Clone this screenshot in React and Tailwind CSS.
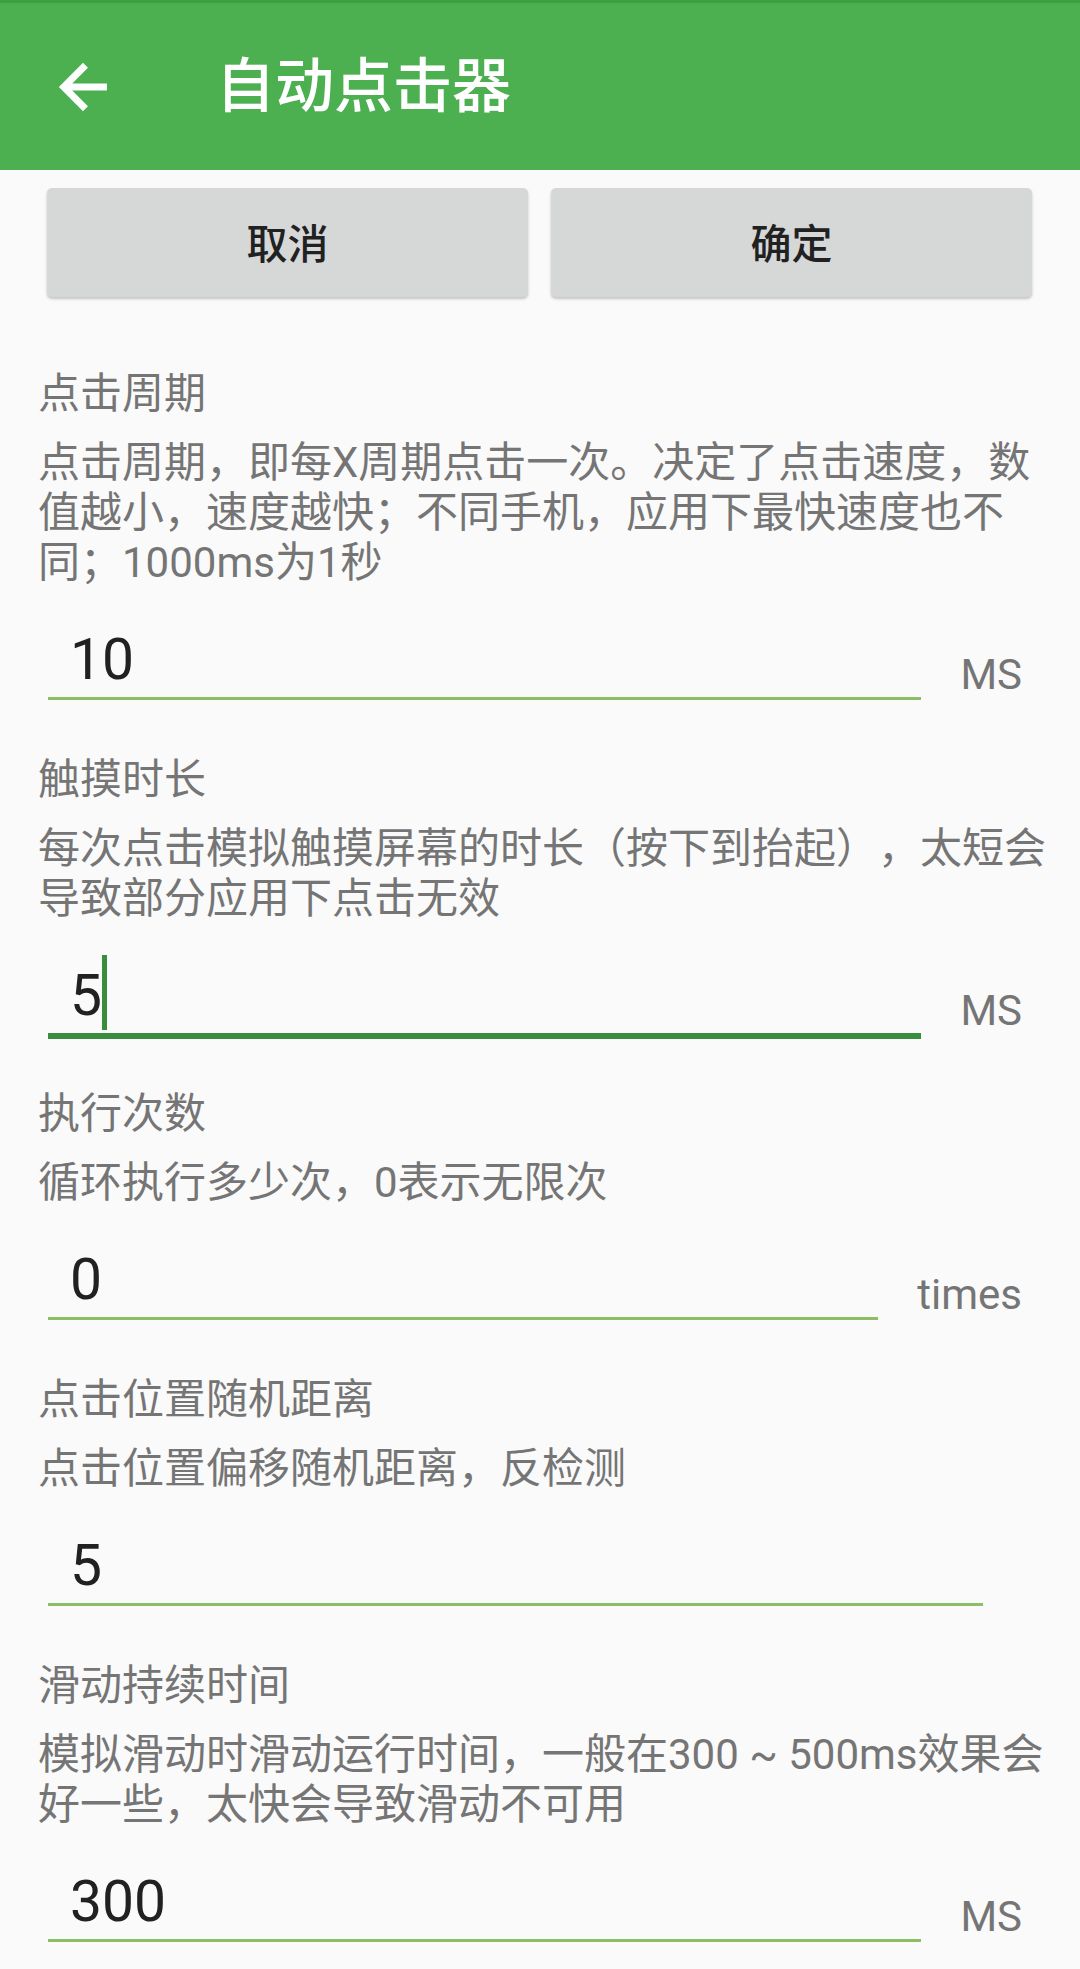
import React from "react"

const sections = [
  {
    title: "点击周期",
    desc: "点击周期，即每X周期点击一次。决定了点击速度，数值越小，速度越快；不同手机，应用下最快速度也不同；1000ms为1秒",
    value: "10",
    unit: "MS",
  },
  {
    title: "触摸时长",
    desc: "每次点击模拟触摸屏幕的时长（按下到抬起），太短会导致部分应用下点击无效",
    value: "5",
    unit: "MS",
    focused: true,
  },
  {
    title: "执行次数",
    desc: "循环执行多少次，0表示无限次",
    value: "0",
    unit: "times",
  },
  {
    title: "点击位置随机距离",
    desc: "点击位置偏移随机距离，反检测",
    value: "5",
    unit: "",
  },
  {
    title: "滑动持续时间",
    desc: "模拟滑动时滑动运行时间，一般在300 ~ 500ms效果会好一些，太快会导致滑动不可用",
    value: "300",
    unit: "MS",
  },
]

function BackArrow() {
  return (
    <svg viewBox="0 0 24 24" className="w-[70px] h-[70px]" fill="white" stroke="white" strokeWidth="0.4">
      <path d="M20 11H7.83l5.59-5.59L12 4l-8 8 8 8 1.41-1.41L7.83 13H20v-2z" />
    </svg>
  )
}

function Setting({ item }) {
  return (
    <div className={item.focused ? "mb-[50px]" : "mb-[55px]"}>
      <div className="pl-[38px] pr-[22px] text-[#757575] text-[42px] leading-[50px] [text-spacing-trim:space-all]">
        <div>{item.title}</div>
        <div className="mt-[19px]">{item.desc}</div>
      </div>

      {/* input row */}
      <div className="mt-[43px] flex items-end pl-[48px] pr-[58px]">
        <div
          className={`flex-1 pl-[22px] pb-[9px] text-[57px] leading-[57px] text-[#212121] ${
            item.focused ? "border-b-[6px] border-[#388e3c]" : "border-b-[3px] border-[#8cbf64]"
          }`}
        >
          {item.value}
          {item.focused && (
            <span className="inline-block w-[5px] h-[75px] -mt-[20px] -mb-[6px] align-[-9px] bg-[#388e3c]"></span>
          )}
        </div>
        <div className={`ml-[39px] text-[42px] leading-none text-[#757575] ${item.focused ? "mb-[7px]" : "mb-[4px]"}`}>
          {item.unit}
        </div>
      </div>
    </div>
  )
}

export default function App() {
  return (
    <div className="min-h-screen bg-[#fafafa] font-[Roboto,'Noto_Sans_CJK_SC',sans-serif]">
      {/* Toolbar */}
      <div className="h-[3px] bg-[#3e9e42]"></div>
      <div className="h-[167px] bg-[#4caf50] flex items-center pl-[48px]">
        <BackArrow />
        <div className="ml-[98px] text-white text-[59px] leading-none font-medium">自动点击器</div>
      </div>

      {/* Buttons */}
      <div className="flex gap-[23px] pl-[47px] pr-[48px] mt-[18px]">
        <button className="flex-1 h-[109px] pt-[6px] rounded-[5px] bg-[#d6d7d7] shadow-[0_2px_3px_rgba(0,0,0,0.22)] text-[41px] font-medium text-[#212121]">
          取消
        </button>
        <button className="flex-1 h-[109px] pt-[6px] rounded-[5px] bg-[#d6d7d7] shadow-[0_2px_3px_rgba(0,0,0,0.22)] text-[41px] font-medium text-[#212121]">
          确定
        </button>
      </div>

      <div className="mt-[72px]">
        {sections.map((s) => (
          <Setting key={s.title} item={s} />
        ))}
      </div>
    </div>
  )
}
